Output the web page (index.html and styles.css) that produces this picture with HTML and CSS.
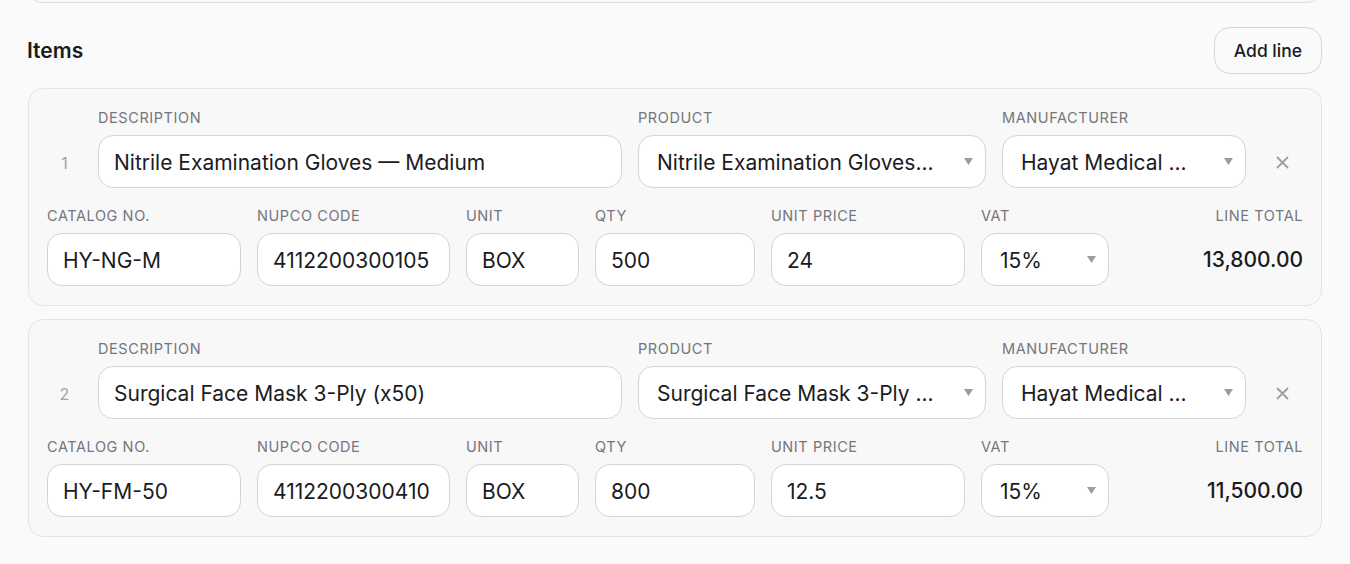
FILE: index.html
```html
<!DOCTYPE html>
<html lang="en">

<head>
    <meta charset="UTF-8">
    <meta name="viewport" content="width=device-width, initial-scale=1.0">
    <title>Items</title>
    <link rel="stylesheet" href="styles.css">
</head>

<body>
    <div class="page">
        <div class="prev-card"></div>

        <div class="section-head">
            <h2 class="section-title">Items</h2>
            <button class="btn">Add line</button>
        </div>

        <div class="lines">
            <div class="line-card">
                <div class="row row-main">
                    <div class="line-no">1</div>
                    <div class="field">
                        <span class="field-label">Description</span>
                        <input class="input" type="text" value="Nitrile Examination Gloves — Medium" />
                    </div>
                    <div class="field">
                        <span class="field-label">Product</span>
                        <div class="select">
                            <span class="select-text">Nitrile Examination Gloves...</span>
                            <svg class="caret" width="9" height="7" viewBox="0 0 9 7"><path d="M0 0h9L4.5 7z" /></svg>
                        </div>
                    </div>
                    <div class="field">
                        <span class="field-label">Manufacturer</span>
                        <div class="select">
                            <span class="select-text">Hayat Medical ...</span>
                            <svg class="caret" width="9" height="7" viewBox="0 0 9 7"><path d="M0 0h9L4.5 7z" /></svg>
                        </div>
                    </div>
                    <button class="remove" title="Remove line">
                        <svg width="13" height="13" viewBox="0 0 13 13"><path d="M1 1l11 11M12 1L1 12" /></svg>
                    </button>
                </div>
                <div class="row row-detail">
                    <div class="field">
                        <span class="field-label">Catalog No.</span>
                        <input class="input" type="text" value="HY-NG-M" />
                    </div>
                    <div class="field">
                        <span class="field-label">NUPCO Code</span>
                        <input class="input" type="text" value="4112200300105" />
                    </div>
                    <div class="field">
                        <span class="field-label">Unit</span>
                        <input class="input" type="text" value="BOX" />
                    </div>
                    <div class="field">
                        <span class="field-label">Qty</span>
                        <input class="input" type="text" value="500" />
                    </div>
                    <div class="field">
                        <span class="field-label">Unit Price</span>
                        <input class="input" type="text" value="24" />
                    </div>
                    <div class="field">
                        <span class="field-label">VAT</span>
                        <div class="select">
                            <span class="select-text">15%</span>
                            <svg class="caret" width="9" height="7" viewBox="0 0 9 7"><path d="M0 0h9L4.5 7z" /></svg>
                        </div>
                    </div>
                    <div class="field field-total">
                        <span class="field-label">Line Total</span>
                        <div class="line-total">13,800.00</div>
                    </div>
                </div>
            </div>

            <div class="line-card">
                <div class="row row-main">
                    <div class="line-no">2</div>
                    <div class="field">
                        <span class="field-label">Description</span>
                        <input class="input" type="text" value="Surgical Face Mask 3-Ply (x50)" />
                    </div>
                    <div class="field">
                        <span class="field-label">Product</span>
                        <div class="select">
                            <span class="select-text">Surgical Face Mask 3-Ply ...</span>
                            <svg class="caret" width="9" height="7" viewBox="0 0 9 7"><path d="M0 0h9L4.5 7z" /></svg>
                        </div>
                    </div>
                    <div class="field">
                        <span class="field-label">Manufacturer</span>
                        <div class="select">
                            <span class="select-text">Hayat Medical ...</span>
                            <svg class="caret" width="9" height="7" viewBox="0 0 9 7"><path d="M0 0h9L4.5 7z" /></svg>
                        </div>
                    </div>
                    <button class="remove" title="Remove line">
                        <svg width="13" height="13" viewBox="0 0 13 13"><path d="M1 1l11 11M12 1L1 12" /></svg>
                    </button>
                </div>
                <div class="row row-detail">
                    <div class="field">
                        <span class="field-label">Catalog No.</span>
                        <input class="input" type="text" value="HY-FM-50" />
                    </div>
                    <div class="field">
                        <span class="field-label">NUPCO Code</span>
                        <input class="input" type="text" value="4112200300410" />
                    </div>
                    <div class="field">
                        <span class="field-label">Unit</span>
                        <input class="input" type="text" value="BOX" />
                    </div>
                    <div class="field">
                        <span class="field-label">Qty</span>
                        <input class="input" type="text" value="800" />
                    </div>
                    <div class="field">
                        <span class="field-label">Unit Price</span>
                        <input class="input" type="text" value="12.5" />
                    </div>
                    <div class="field">
                        <span class="field-label">VAT</span>
                        <div class="select">
                            <span class="select-text">15%</span>
                            <svg class="caret" width="9" height="7" viewBox="0 0 9 7"><path d="M0 0h9L4.5 7z" /></svg>
                        </div>
                    </div>
                    <div class="field field-total">
                        <span class="field-label">Line Total</span>
                        <div class="line-total">11,500.00</div>
                    </div>
                </div>
            </div>
        </div>
    </div>
</body>

</html>
```

FILE: styles.css
```css
* {
    box-sizing: border-box;
}

body {
    margin: 0;
    background-color: #fafafa;
    font-family: Inter, "Noto Sans", sans-serif;
    color: #1b1b1f;
}

.page {
    margin: 0 28px;
}

/* bottom edge of the card above, cut by the top of the window */
.prev-card {
    height: 40px;
    margin-top: -37px;
    border: 1px solid #dcdce0;
    border-radius: 14px;
    background-color: #f8f8f9;
}

.section-head {
    display: flex;
    justify-content: space-between;
    align-items: center;
    margin-top: 24px;
    margin-bottom: 14px;
}

.section-title {
    margin: 0 0 0 -1px;
    font-size: 21px;
    font-weight: 600;
}

.btn {
    height: 47px;
    padding: 0 19px;
    border: 1px solid #d4d4d8;
    border-radius: 16px;
    background-color: #fafafa;
    font-family: inherit;
    font-size: 17.5px;
    font-weight: 500;
    color: #1b1b1f;
    cursor: pointer;
}

.lines {
    display: flex;
    flex-direction: column;
    gap: 13px;
}

.line-card {
    border: 1px solid #e4e4e7;
    border-radius: 15px;
    background-color: #f8f8f9;
    padding: 20px 18px 19px;
}

.row {
    display: grid;
    column-gap: 16px;
    align-items: end;
}

.row-main {
    grid-template-columns: 35px 524px 348px 244px 1fr;
}

.row-detail {
    grid-template-columns: 194px 193px 113px 160px 194px 128px 1fr;
    margin-top: 19px;
}

.field {
    display: flex;
    flex-direction: column;
    min-width: 0;
}

.field-label {
    display: block;
    height: 18px;
    line-height: 18px;
    margin-bottom: 8px;
    font-size: 14.5px;
    font-weight: 400;
    letter-spacing: 0.04em;
    text-transform: uppercase;
    color: #75757c;
    white-space: nowrap;
}

.input,
.select {
    width: 100%;
    height: 53px;
    border: 1px solid #d4d4d8;
    border-radius: 15px;
    background-color: #fff;
    font-family: inherit;
    font-size: 21px;
    color: #1b1b1f;
}

.input {
    padding: 2px 15px 0;
    outline: none;
}

.select {
    display: flex;
    align-items: center;
    gap: 12px;
    padding: 2px 12px 0 18px;
}

.select-text {
    flex: 1;
    min-width: 0;
    overflow: hidden;
    white-space: nowrap;
}

.caret {
    flex: none;
    fill: #9b9ba1;
    margin-top: -2px;
}

.line-no {
    height: 53px;
    display: flex;
    align-items: center;
    justify-content: center;
    padding-top: 2px;
    font-size: 16px;
    color: #a1a1a8;
}

.remove {
    height: 53px;
    display: flex;
    align-items: center;
    justify-content: center;
    padding: 2px 0 0;
    border: none;
    background: none;
    cursor: pointer;
}

.remove svg {
    stroke: #9d9da4;
    stroke-width: 1.8;
    fill: none;
}

.field-total {
    align-items: flex-end;
}

.line-total {
    height: 53px;
    display: flex;
    align-items: center;
    font-size: 21px;
    font-weight: 500;
    color: #1b1b1f;
}
```
